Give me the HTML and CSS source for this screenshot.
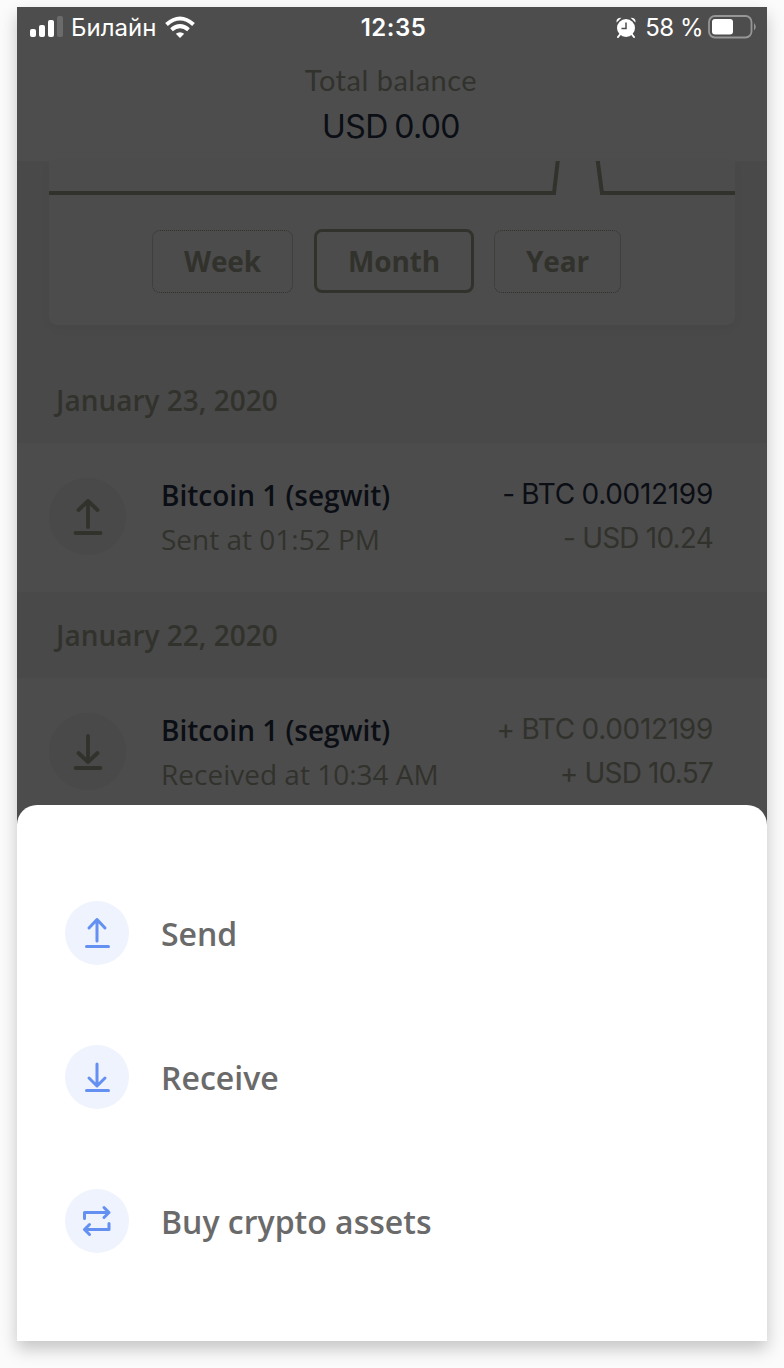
FILE: index.html
```html
<!DOCTYPE html>
<html lang="en">
<head>
    <meta charset="UTF-8">
    <meta name="viewport" content="width=device-width, initial-scale=1.0">
    <title>Wallet</title>
    <link rel="stylesheet" href="styles.css">
</head>
<body>
    <div class="phone">
        <div class="top">
            <div class="status-bar">
                <div class="status-left">
                    <svg class="signal" width="34" height="22" viewBox="0 0 34 22">
                        <rect x="0" y="13" width="6" height="8" rx="2" fill="#fff"/>
                        <rect x="9" y="9" width="6" height="12" rx="2" fill="#fff"/>
                        <rect x="18" y="4" width="6" height="17" rx="2" fill="#fff"/>
                        <rect x="27" y="0" width="6" height="21" rx="2" fill="#6b6b6b"/>
                    </svg>
                    <span class="carrier">Билайн</span>
                    <svg class="wifi" width="30" height="22" viewBox="0 0 30 22" fill="none" stroke="#fff" stroke-width="4">
                        <path d="M1.5 8.500 Q15 -3.500 28.500 8.500"/>
                        <path d="M6.500 13.800 Q15 6.500 23.500 13.800"/>
                        <path d="M10.800 17.800 Q15 14.500 19.200 17.800 L15 22 Z" fill="#fff" stroke="none"/>
                    </svg>
                </div>
                <div class="clock">12:35</div>
                <div class="status-right">
                    <svg class="alarm" width="20" height="21" viewBox="0 0 20 21">
                        <circle cx="10" cy="11" r="9" fill="#fff"/>
                        <path d="M0.6 5.6 Q-0.2 0.6 5.4 0.8 Z M19.4 5.6 Q20.2 0.6 14.6 0.8 Z" fill="#fff"/>
                        <path d="M4 17.5 L2 20 M16 17.5 L18 20" stroke="#fff" stroke-width="2" stroke-linecap="round"/>
                        <path d="M10 5.5 V11.5 H5.5" stroke="#4d4d4d" stroke-width="1.5" fill="none"/>
                    </svg>
                    <span class="percent">58 %</span>
                    <svg class="battery" width="49" height="24" viewBox="0 0 49 24">
                        <rect x="1" y="1" width="42.5" height="21.5" rx="6" fill="none" stroke="#969696" stroke-width="1.8"/>
                        <rect x="4" y="4" width="21" height="15.5" rx="3" fill="#fff"/>
                        <path d="M46 8 Q49.500 12 46 15.500 Z" fill="#969696"/>
                    </svg>
                </div>
            </div>
            <div class="balance-label">Total balance</div>
            <div class="balance">USD 0.00</div>
        </div>

        <div class="chart-card">
            <svg class="chart" width="686" height="36" viewBox="0 0 686 36" fill="none" stroke="#32322d" stroke-width="4">
                <path d="M0 32 H505 L509 -2 M548.500 -2 L553 32 H686"/>
            </svg>
            <div class="periods">
                <div class="period week">Week</div>
                <div class="period month active">Month</div>
                <div class="period year">Year</div>
            </div>
        </div>

        <div class="day">January 23, 2020</div>
        <div class="operation">
            <div class="op-icon">
                <svg width="32" height="38" viewBox="0 0 32 38" fill="none" stroke="#32322d" stroke-width="3.8" stroke-linecap="round" stroke-linejoin="round">
                    <path d="M16 29 V3 M6.500 12 L16 3 L25.500 12"/>
                    <path d="M3.500 35 H28.500"/>
                </svg>
            </div>
            <div class="op-info">
                <div class="op-name">Bitcoin 1 (segwit)</div>
                <div class="op-time">Sent at 01:52 PM</div>
            </div>
            <div class="op-amounts">
                <div class="crypto dark">- BTC 0.0012199</div>
                <div class="fiat">- USD 10.24</div>
            </div>
        </div>

        <div class="day">January 22, 2020</div>
        <div class="operation">
            <div class="op-icon">
                <svg width="32" height="38" viewBox="0 0 32 38" fill="none" stroke="#32322d" stroke-width="3.8" stroke-linecap="round" stroke-linejoin="round">
                    <path d="M16 3 V29 M6.500 20 L16 29 L25.500 20"/>
                    <path d="M3.500 35 H28.500"/>
                </svg>
            </div>
            <div class="op-info">
                <div class="op-name">Bitcoin 1 (segwit)</div>
                <div class="op-time">Received at 10:34 AM</div>
            </div>
            <div class="op-amounts">
                <div class="crypto">+ BTC 0.0012199</div>
                <div class="fiat">+ USD 10.57</div>
            </div>
        </div>

        <div class="sheet">
            <div class="action">
                <div class="action-icon">
                    <svg width="32" height="32" viewBox="0 0 32 32" fill="none" stroke="#6490f1" stroke-width="3" stroke-linecap="round" stroke-linejoin="round">
                        <path d="M16 24 V2.500 M8 11 L16 2.500 L24 11"/>
                        <path d="M5.500 29.500 H27.500"/>
                    </svg>
                </div>
                <div class="action-label">Send</div>
            </div>
            <div class="action">
                <div class="action-icon">
                    <svg width="32" height="32" viewBox="0 0 32 32" fill="none" stroke="#6490f1" stroke-width="3" stroke-linecap="round" stroke-linejoin="round">
                        <path d="M16 3 V25 M8 17 L16 25 L24 17"/>
                        <path d="M5.500 29.500 H27.500"/>
                    </svg>
                </div>
                <div class="action-label">Receive</div>
            </div>
            <div class="action">
                <div class="action-icon">
                    <svg width="32" height="32" viewBox="0 0 32 32" fill="none" stroke="#6490f1" stroke-width="3" stroke-linecap="round" stroke-linejoin="round">
                        <path d="M3.500 13.500 V7.500 H28 M23 2.500 L28 7.500 L23 12.500"/>
                        <path d="M28 18.500 V24.500 H3.500 M8.500 19.500 L3.500 24.500 L8.500 29.500"/>
                    </svg>
                </div>
                <div class="action-label">Buy crypto assets</div>
            </div>
        </div>
    </div>
</body>
</html>
```
FILE: styles.css
```css
* {
    box-sizing: border-box;
}
body {
    margin: 0;
    padding: 7px 17px 27px;
    background: #fbfbfb;
    font-family: "Open Sans", sans-serif;
    overflow: hidden;
}
.phone {
    position: relative;
    width: 750px;
    height: 1334px;
    background: #494949;
    color: #32322d;
    box-shadow: 0 8px 16px rgba(0, 0, 0, 0.22);
    white-space: nowrap;
}
.top {
    height: 154px;
    background: #4d4d4d;
    text-align: center;
}
.status-bar {
    display: grid;
    grid-template-columns: 1fr auto 1fr;
    align-items: center;
    height: 40px;
    padding: 0 10px 0 13px;
    color: #fff;
    font-family: Inter, sans-serif;
    font-size: 24px;
}
.status-left,
.status-right {
    display: flex;
    align-items: center;
}
.status-right {
    justify-content: flex-end;
}
.carrier {
    margin: 0 9px 0 7px;
}
.clock {
    font-weight: 600;
    letter-spacing: 0.5px;
}
.percent {
    margin: 0 5px 0 9px;
    letter-spacing: -0.5px;
}
.balance-label {
    margin: 13px 2px 0 0;
    font-family: Lato, sans-serif;
    font-size: 29px;
    line-height: 40px;
    letter-spacing: 0.5px;
}
.balance {
    margin: 5px 2px 0 0;
    font-family: Inter, sans-serif;
    font-size: 32px;
    line-height: 44px;
    letter-spacing: -0.6px;
    word-spacing: -2px;
    color: #0b0e14;
}
.chart-card {
    height: 164px;
    margin: 0 32px 32px;
    background: #4c4c4c;
    border-radius: 0 0 8px 8px;
    box-shadow: 0 4px 12px rgba(0, 0, 0, 0.03);
}
.chart {
    display: block;
}
.periods {
    display: flex;
    justify-content: center;
    align-items: center;
    gap: 20px;
    height: 64px;
    margin: 32px 11px 0 0;
}
.period {
    height: 63px;
    border: 1px dotted #32322d;
    border-radius: 8px;
    font-size: 28px;
    font-weight: 700;
    line-height: 60px;
    letter-spacing: -0.1px;
    text-align: center;
}
.week {
    width: 141px;
    margin-right: 1px;
}
.month {
    width: 160px;
}
.year {
    width: 127px;
}
.period.active {
    height: 64px;
    border: 3px solid #32322d;
    line-height: 58px;
}
.day {
    height: 86px;
    padding-left: 39px;
    font-size: 28px;
    font-weight: 600;
    line-height: 87px;
}
.operation {
    display: flex;
    height: 149px;
    padding: 30px 54px 0 32px;
    background: #4c4c4c;
}
.op-icon {
    display: flex;
    justify-content: center;
    align-items: center;
    width: 77px;
    height: 77px;
    margin: 5px 35px 0 0;
    border-radius: 50%;
    background: #494949;
}
.op-info {
    flex: 1;
    font-size: 28px;
    line-height: 44px;
}
.op-name {
    color: #0b0e14;
    font-weight: 600;
}
.op-amounts {
    margin-top: -1px;
    font-family: Inter, sans-serif;
    font-size: 28px;
    line-height: 44px;
    text-align: right;
}
.crypto {
    letter-spacing: -0.3px;
    word-spacing: -1px;
}
.fiat {
    letter-spacing: -0.8px;
}
.dark {
    color: #0b0e14;
}
.sheet {
    position: absolute;
    left: 0;
    right: 0;
    bottom: 0;
    height: 536px;
    padding: 96px 48px 0;
    display: flex;
    flex-direction: column;
    gap: 80px;
    background: #fff;
    border-radius: 20px 20px 0 0;
}
.action {
    display: flex;
    align-items: center;
    gap: 32px;
    height: 64px;
}
.action-icon {
    display: flex;
    justify-content: center;
    align-items: center;
    width: 64px;
    height: 64px;
    border-radius: 50%;
    background: #eff3fd;
}
.action-label {
    padding-top: 1px;
    color: #6a6a6a;
    font-size: 32px;
    font-weight: 600;
}
```
